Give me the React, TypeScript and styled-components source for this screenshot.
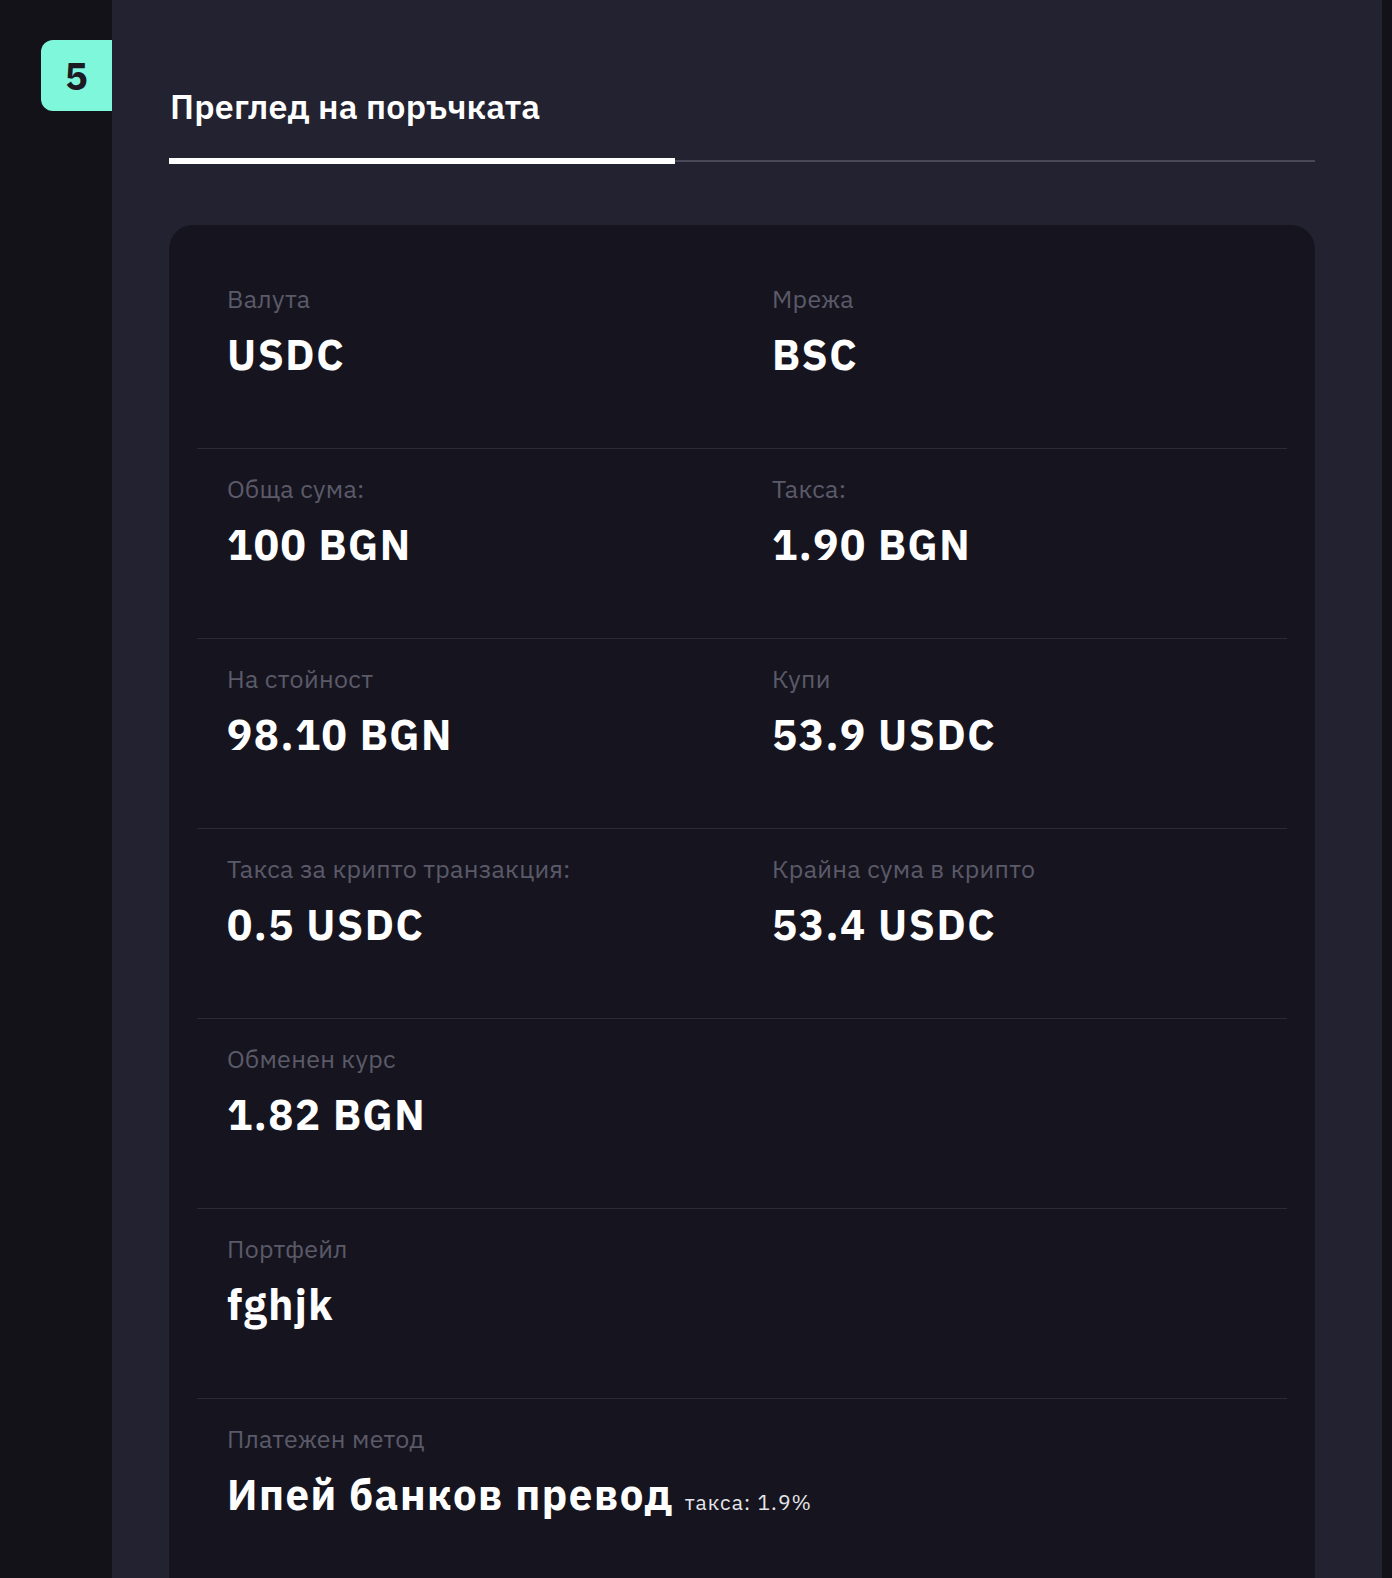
import React from 'react';
import styled, { createGlobalStyle } from 'styled-components';

const GlobalStyle = createGlobalStyle`
  html, body {
    margin: 0;
    padding: 0;
    height: 1578px;
    overflow: hidden;
    background: #131218;
  }
  body {
    font-family: "IBM Plex Sans", Roboto, "Noto Sans", sans-serif;
    color: #ffffff;
  }
`;

const Page = styled.div`
  display: flex;
  height: 1578px;
  overflow: hidden;
  background: #131218;
`;

const StepColumn = styled.div`
  width: 112px;
  flex-shrink: 0;
  display: flex;
  justify-content: flex-end;
  padding-top: 40px;
  box-sizing: border-box;
`;

const StepBadge = styled.div`
  width: 71px;
  height: 71px;
  background: #7ff7da;
  border-radius: 12px 0 0 12px;
  display: flex;
  align-items: center;
  justify-content: center;
  color: #1c1b24;
  font-size: 38px;
  font-weight: 700;
`;

const Panel = styled.div`
  width: 1270px;
  flex-shrink: 0;
  background: #232230;
  padding: 82px 67px 0 57px;
  box-sizing: border-box;
`;

const Tabs = styled.div`
  display: flex;
  align-items: center;
`;

const Tab = styled.div<{ $active?: boolean }>`
  flex: ${(p) => (p.$active ? '0 0 506px' : '1')};
  display: flex;
  flex-direction: column;
  justify-content: flex-end;
  height: 82px;
`;

const TabLabel = styled.div`
  font-size: 34px;
  font-weight: 600;
  line-height: 46px;
  letter-spacing: 0.2px;
  padding-left: 1px;
  color: #ffffff;
  margin-bottom: 29px;
`;

const TabLine = styled.div<{ $active?: boolean }>`
  height: ${(p) => (p.$active ? '6px' : '2px')};
  background: ${(p) => (p.$active ? '#ffffff' : '#4a4957')};
  margin-bottom: ${(p) => (p.$active ? '0' : '2px')};
`;

const Card = styled.div`
  margin-top: 61px;
  background: #16151f;
  border-radius: 24px 24px 0 0;
  padding: 34px 28px 0;
`;

const Row = styled.div`
  display: grid;
  grid-template-columns: 1fr 1fr;
  padding: 25px 0 69px;
  border-bottom: 1px solid #2b2a36;

  &:last-child {
    border-bottom: none;
  }
`;

const Cell = styled.div`
  padding-left: 30px;
  display: flex;
  flex-direction: column;
`;

const Label = styled.div`
  font-size: 25px;
  line-height: 30px;
  color: #5b5a69;
  letter-spacing: 0.3px;
`;

const Value = styled.div`
  margin-top: 17px;
  font-size: 42px;
  line-height: 48px;
  font-weight: 700;
  letter-spacing: 1.5px;
  color: #ffffff;
  white-space: nowrap;
`;

const Note = styled.span`
  font-size: 21px;
  font-weight: 400;
  letter-spacing: 1.1px;
  color: #e6e6ea;
  margin-left: 11px;
`;

type Item = { label: string; value: string; note?: string };

const rows: Item[][] = [
  [
    { label: 'Валута', value: 'USDC' },
    { label: 'Мрежа', value: 'BSC' },
  ],
  [
    { label: 'Обща сума:', value: '100 BGN' },
    { label: 'Такса:', value: '1.90 BGN' },
  ],
  [
    { label: 'На стойност', value: '98.10 BGN' },
    { label: 'Купи', value: '53.9 USDC' },
  ],
  [
    { label: 'Такса за крипто транзакция:', value: '0.5 USDC' },
    { label: 'Крайна сума в крипто', value: '53.4 USDC' },
  ],
  [{ label: 'Обменен курс', value: '1.82 BGN' }],
  [{ label: 'Портфейл', value: 'fghjk' }],
  [{ label: 'Платежен метод', value: 'Ипей банков превод', note: 'такса: 1.9%' }],
];

export default function App() {
  return (
    <>
      <GlobalStyle />
      <Page>
        <StepColumn>
          <StepBadge>5</StepBadge>
        </StepColumn>
        <Panel>
          <Tabs>
            <Tab $active>
              <TabLabel>Преглед на поръчката</TabLabel>
              <TabLine $active />
            </Tab>
            <Tab>
              <TabLine />
            </Tab>
          </Tabs>
          <Card>
            {rows.map((row, i) => (
              <Row key={i}>
                {row.map((item) => (
                  <Cell key={item.label}>
                    <Label>{item.label}</Label>
                    <Value>
                      {item.value}
                      {item.note && <Note>{item.note}</Note>}
                    </Value>
                  </Cell>
                ))}
              </Row>
            ))}
          </Card>
        </Panel>
      </Page>
    </>
  );
}
